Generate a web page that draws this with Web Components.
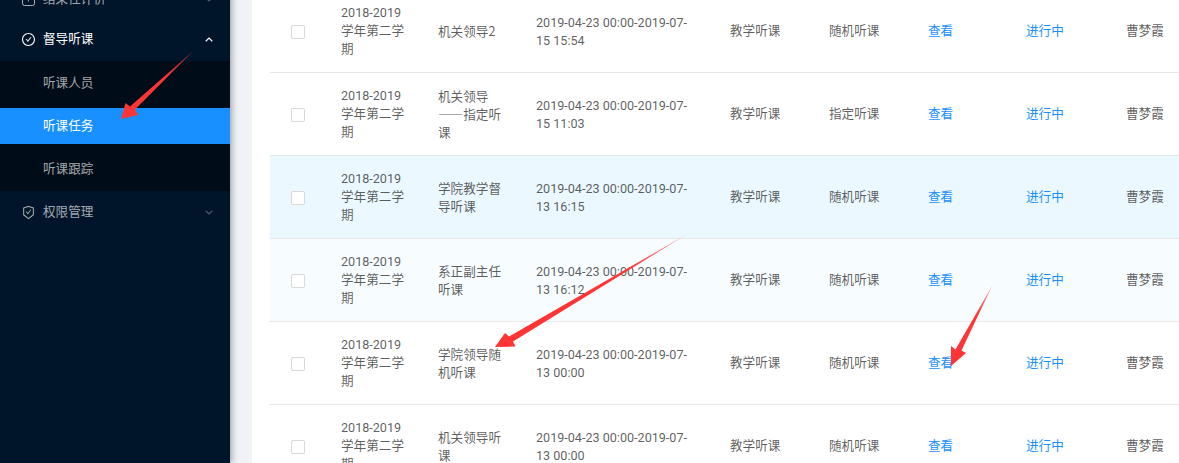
<!DOCTYPE html>
<html lang="zh">
<head>
<meta charset="utf-8">
<title>听课任务</title>
<style>
  html, body { margin: 0; padding: 0; width: 1179px; height: 463px; overflow: hidden; background: #f0f2f5; }
  body { font: 12.6px/18px Roboto, "Noto Sans CJK SC", sans-serif; display: flex; }
</style>
</head>
<body>
<template id="t-item">
  <style>
    :host { display: flex; align-items: center; height: 36px; margin: 3px 0 4px; padding-left: 22px; color: rgba(255,255,255,.65); }
    :host([active]) { color: #fff; }
    .icon { width: 13px; height: 13px; margin-right: 8px; display: flex; flex: none; }
    .label { flex: 1; }
    .chev { width: 8px; height: 5px; margin-right: 17px; flex: none; opacity: .45; }
    :host([active]) .chev { opacity: 1; }
    :host([open]) .chev { transform: rotate(180deg); }
    ::slotted(svg) { width: 13px; height: 13px; fill: currentColor; }
  </style>
  <span class="icon"><slot name="icon"></slot></span>
  <span class="label"><slot></slot></span>
  <svg class="chev" viewBox="0 0 8 5"><path d="M.7.8 4 4 7.3.8" fill="none" stroke="currentColor" stroke-width="1.2"/></svg>
</template>
<template id="t-sub">
  <style>
    :host { display: flex; align-items: center; height: 36px; margin: 7px 0; padding-left: 43px; color: rgba(255,255,255,.65); }
    :host(:first-child) { margin-top: 4px; }
    :host(:last-child) { margin-bottom: 4px; }
    :host([selected]) { background: #1890ff; color: #fff; }
  </style>
  <slot></slot>
</template>
<template id="t-sidebar">
  <style>
    :host { display: block; width: 230px; flex: none; height: 485px; margin-top: -22px; background: #001529; box-shadow: 2px 0 6px rgba(0,21,41,.35); position: relative; z-index: 1; }
  </style>
  <slot></slot>
</template>
<template id="t-submenu">
  <style>:host { display: flow-root; background: #000c17; margin-top: 4px; margin-bottom: 3px; }</style>
  <slot></slot>
</template>
<template id="t-card">
  <style>
    :host { display: block; flex: 1; min-width: 0; margin-left: 22px; background: #fff; padding-left: 18px; overflow: hidden; }
    .inner { margin-top: -10px; width: 909px; }
  </style>
  <div class="inner"><slot></slot></div>
</template>
<template id="t-row">
  <style>
    :host { display: grid; grid-template-columns: 71px 97px 98px 194px 99px 99px 98px 100px 53px; align-items: center; height: 82px; border-bottom: 1px solid #e8e8e8; color: rgba(0,0,0,.65); }
    :host([tone="hover"]) { background: #ecf8ff; }
    :host([tone="soft"]) { background: #f7fcff; }
    .check { width: 12px; height: 12px; margin-left: 21px; margin-top: 2px; border: 1px solid #d9d9d9; border-radius: 2px; background: #fff; }
    .term { width: 68px; }
    .name { width: 66px; font-family: "Noto Sans CJK SC", Roboto, sans-serif; }
    .time { width: 158px; padding-top: 2px; }
    .link { color: #1890ff; }
  </style>
  <div class="check"></div>
  <div class="term"></div>
  <div class="name"></div>
  <div class="time"></div>
  <div class="type"></div>
  <div class="mode"></div>
  <div class="link view">查看</div>
  <div class="link status">进行中</div>
  <div class="person"></div>
</template>
<template id="t-arrows">
  <style>:host { position: fixed; left: 0; top: 0; width: 1179px; height: 463px; z-index: 5; pointer-events: none; } svg { display: block; }</style>
  <svg width="1179" height="463" viewBox="0 0 1179 463">
    <defs>
      <linearGradient id="g1" gradientUnits="userSpaceOnUse" x1="194" y1="51" x2="165" y2="78"><stop offset="0" stop-color="#ff3b3b" stop-opacity=".55"/><stop offset="1" stop-color="#ff3535"/></linearGradient>
      <linearGradient id="g2" gradientUnits="userSpaceOnUse" x1="686" y1="235" x2="630" y2="270"><stop offset="0" stop-color="#ff3b3b" stop-opacity=".5"/><stop offset="1" stop-color="#ff3535"/></linearGradient>
      <linearGradient id="g3" gradientUnits="userSpaceOnUse" x1="992" y1="286" x2="978" y2="314"><stop offset="0" stop-color="#ff3b3b" stop-opacity=".5"/><stop offset="1" stop-color="#ff3535"/></linearGradient>
    </defs>
    <polygon fill="url(#g1)" points="193.800,50.500 135,109.500 138,115 121,119 125.500,103 130,106.500"/>
    <polygon fill="url(#g2)" points="686.500,234.500 513,341.500 515.500,346.500 495,347 505,333 509,336.500"/>
    <polygon fill="url(#g3)" points="992.300,285.500 961.500,350.500 966,353 951,366 951,346 955.500,349.500"/>
  </svg>
</template>

<app-sidebar>
  <menu-item>
    <svg slot="icon" viewBox="0 0 13 13"><path d="M1.500 1.500h10a1 1 0 0 1 1 1v8a2 2 0 0 1-2 2h-8a2 2 0 0 1-2-2v-8a1 1 0 0 1 1-1z" fill="none" stroke="currentColor"/><path d="M6.100 5h.9v3.500h-.9z"/></svg>
    结果性评价
  </menu-item>
  <menu-item active open>
    <svg slot="icon" viewBox="64 64 896 896"><path d="M699 353h-46.900c-10.200 0-19.900 4.900-25.900 13.300L469 584.300l-71.200-98.800c-6-8.300-15.600-13.300-25.900-13.300H325c-6.500 0-10.300 7.400-6.500 12.700l124.600 172.800a31.800 31.800 0 0 0 51.700 0l210.600-292c3.900-5.300.1-12.700-6.400-12.700z"/><path d="M512 64C264.600 64 64 264.600 64 512s200.600 448 448 448 448-200.600 448-448S759.400 64 512 64zm0 820c-205.400 0-372-166.600-372-372s166.600-372 372-372 372 166.600 372 372-166.600 372-372 372z"/></svg>
    督导听课
  </menu-item>
  <sub-menu>
    <sub-item>听课人员</sub-item>
    <sub-item selected>听课任务</sub-item>
    <sub-item>听课跟踪</sub-item>
  </sub-menu>
  <menu-item>
    <svg slot="icon" viewBox="64 64 896 896"><path d="M866.900 169.900L527.100 54.100C523 52.700 517.500 52 512 52s-11 .7-15.100 2.100L157.100 169.900c-8.300 2.800-15.100 12.400-15.100 21.200v482.400c0 8.800 5.700 20.400 12.600 25.900L499.300 968c3.500 2.700 8 4.100 12.600 4.100s9.200-1.400 12.600-4.100l344.700-268.600c6.900-5.400 12.600-17 12.600-25.900V191.100c.2-8.800-6.600-18.300-14.900-21.200zM810 654.300L512 886.500 214 654.300V226.700l298-101.600 298 101.600v427.600zm-405.800-201c-3-4.100-7.800-6.600-13-6.600H336c-6.500 0-10.300 7.400-6.500 12.700l126.400 174a16.100 16.100 0 0 0 26 0l212.600-292.700c3.800-5.300 0-12.700-6.500-12.700h-55.200c-5.100 0-10 2.500-13 6.600L468.900 542.400l-64.700-89.100z"/></svg>
    权限管理
  </menu-item>
</app-sidebar>

<task-card>
  <task-row name="机关领导2" time="15 15:54" mode="随机听课"></task-row>
  <task-row name="机关领导——指定听课" time="15 11:03" mode="指定听课"></task-row>
  <task-row tone="hover" name="学院教学督导听课" time="13 16:15" mode="随机听课"></task-row>
  <task-row tone="soft" name="系正副主任听课" time="13 16:12" mode="随机听课"></task-row>
  <task-row name="学院领导随机听课" time="13 00:00" mode="随机听课"></task-row>
  <task-row name="机关领导听课" time="13 00:00" mode="随机听课"></task-row>
</task-card>

<page-arrows></page-arrows>

<script>
  function tpl(id, host) {
    const root = host.attachShadow({ mode: 'open' });
    root.appendChild(document.getElementById(id).content.cloneNode(true));
    return root;
  }
  const simple = { 'app-sidebar': 't-sidebar', 'menu-item': 't-item', 'sub-menu': 't-submenu', 'sub-item': 't-sub', 'task-card': 't-card', 'page-arrows': 't-arrows' };
  for (const [name, id] of Object.entries(simple)) {
    customElements.define(name, class extends HTMLElement {
      constructor() { super(); tpl(id, this); }
    });
  }
  customElements.define('task-row', class extends HTMLElement {
    connectedCallback() {
      const r = this.shadowRoot || tpl('t-row', this);
      r.querySelector('.term').textContent = '2018-2019 学年第二学期';
      r.querySelector('.name').textContent = this.getAttribute('name');
      const t = r.querySelector('.time');
      t.textContent = '2019-04-23 00:00-2019-07-';
      t.appendChild(document.createElement('wbr'));
      t.appendChild(document.createTextNode(this.getAttribute('time')));
      r.querySelector('.type').textContent = '教学听课';
      r.querySelector('.mode').textContent = this.getAttribute('mode');
      r.querySelector('.person').textContent = '曹梦霞';
    }
  });
</script>
</body>
</html>
